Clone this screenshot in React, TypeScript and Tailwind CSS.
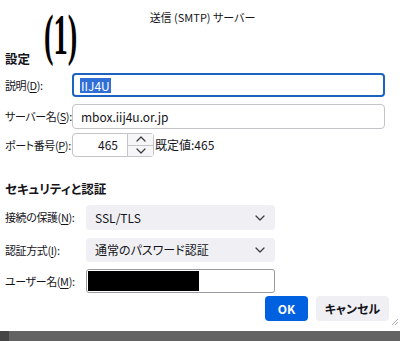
import React from "react";

function Chevron({ className = "" }: { className?: string }) {
  return (
    <svg className={className} width="10" height="6" viewBox="0 0 10 6" fill="none">
      <path d="M1 1l4 4 4-4" stroke="#3a3a3a" strokeWidth="1.2" strokeLinecap="round" strokeLinejoin="round" />
    </svg>
  );
}

function Label({ text, u, rest, w }: { text: string; u: string; rest: string; w: string }) {
  return (
    <div className={`${w} shrink-0 whitespace-nowrap text-[11px] tracking-[-0.4px] text-[#15141a] leading-none`}>
      {text}(<span className="underline underline-offset-2">{u}</span>){rest}
    </div>
  );
}

export default function App() {
  return (
    <div className="relative w-[400px] h-[341px] bg-white overflow-hidden flex flex-col font-['Noto_Sans_CJK_JP','Noto_Sans',sans-serif] [font-feature-settings:'palt']">
      {/* annotation */}
      <div className="absolute left-[31px] top-[6px] text-[57px] leading-none font-bold text-black scale-x-[0.5] origin-left font-['Liberation_Serif',serif] [font-feature-settings:normal]">
        <span className="inline-block translate-x-[26px]">(1)</span>
      </div>

      <div className="flex-1 flex flex-col pl-[5px] pt-[9px]">
        <div className="h-[16px] text-[11px] leading-[16px] text-center text-[#15141a]">送信 (SMTP) サーバー</div>

        <div className="mt-[26px] h-[16px] flex items-center text-[12.5px] font-bold text-[#15141a]">設定</div>

        {/* description */}
        <div className="mt-[6px] flex items-center h-[24px]">
          <Label text="説明" u="D" rest=":" w="w-[67px]" />
          <div className="w-[313px] h-[24px] rounded-[4px] border-2 border-[#1c62c0] flex items-center pl-[6px]">
            <span className="bg-[#2f6fd6] text-white text-[12px] leading-[15px] px-[1px]">IIJ4U</span>
          </div>
        </div>

        {/* server */}
        <div className="mt-[7px] flex items-center h-[25px]">
          <Label text="サーバー名" u="S" rest=":" w="w-[67px]" />
          <div className="w-[313px] h-[25px] rounded-[4px] border border-[#c4c4c8] flex items-center pl-[8px] text-[12px] text-[#15141a]">
            mbox.iij4u.or.jp
          </div>
        </div>

        {/* port */}
        <div className="mt-[4px] flex items-center h-[24px]">
          <Label text="ポート番号" u="P" rest=":" w="w-[67px]" />
          <div className="w-[56px] h-[24px] rounded-l-[4px] border border-[#c4c4c8] flex items-center justify-end pr-[9px] text-[12px] text-[#15141a]">
            465
          </div>
          <div className="w-[26px] h-[24px] border border-l-0 border-[#c4c4c8] rounded-r-[4px] flex flex-col">
            <div className="flex-1 flex items-center justify-center border-b border-[#c4c4c8] bg-[#f6f6f8]">
              <Chevron className="rotate-180" />
            </div>
            <div className="flex-1 flex items-center justify-center bg-[#f6f6f8]">
              <Chevron />
            </div>
          </div>
          <div className="ml-[1px] text-[12px] text-[#15141a]">既定値:465</div>
        </div>

        <div className="mt-[24px] h-[16px] flex items-center text-[12.5px] font-bold text-[#15141a]">セキュリティと認証</div>

        {/* connection security */}
        <div className="mt-[8px] flex items-center h-[25px]">
          <Label text="接続の保護" u="N" rest=":" w="w-[81px]" />
          <div className="w-[189px] h-[25px] rounded-[4px] bg-[#f0f0f4] flex items-center justify-between pl-[9px] pr-[10px] text-[12px] text-[#15141a]">
            <span>SSL/TLS</span>
            <Chevron />
          </div>
        </div>

        {/* auth method */}
        <div className="mt-[8px] flex items-center h-[24px]">
          <Label text="認証方式" u="I" rest=":" w="w-[81px]" />
          <div className="w-[189px] h-[24px] rounded-[4px] bg-[#f0f0f4] flex items-center justify-between pl-[9px] pr-[10px] text-[12px] text-[#15141a]">
            <span>通常のパスワード認証</span>
            <Chevron />
          </div>
        </div>

        {/* username */}
        <div className="mt-[7px] flex items-center h-[24px]">
          <Label text="ユーザー名" u="M" rest=":" w="w-[81px]" />
          <div className="w-[189px] h-[24px] rounded-[3px] border border-[#9a9aa0] flex items-center pl-[1px]">
            <div className="w-[111px] h-[20px] bg-black" />
          </div>
        </div>

        {/* buttons */}
        <div className="mt-[3px] flex justify-end gap-[8px] pr-[11px]">
          <button className="w-[43px] h-[25px] rounded-[4px] bg-[#0061e0] text-white text-[12px] font-bold">OK</button>
          <button className="w-[73px] h-[25px] rounded-[4px] bg-[#f0f0f4] text-[#15141a] text-[12px] font-bold">キャンセル</button>
        </div>
      </div>

      {/* resize grip */}
      <svg className="absolute right-[1px] top-[318px]" width="8" height="8" viewBox="0 0 8 8">
        <path d="M7 1L1 7M7 4L4 7" stroke="#9a9aa0" strokeWidth="0.8" />
      </svg>

      {/* taskbar strip */}
      <div className="h-[10px] flex">
        <div className="w-[9px] bg-[#454545]" />
        <div className="flex-1 bg-[#626262]" />
      </div>
    </div>
  );
}
